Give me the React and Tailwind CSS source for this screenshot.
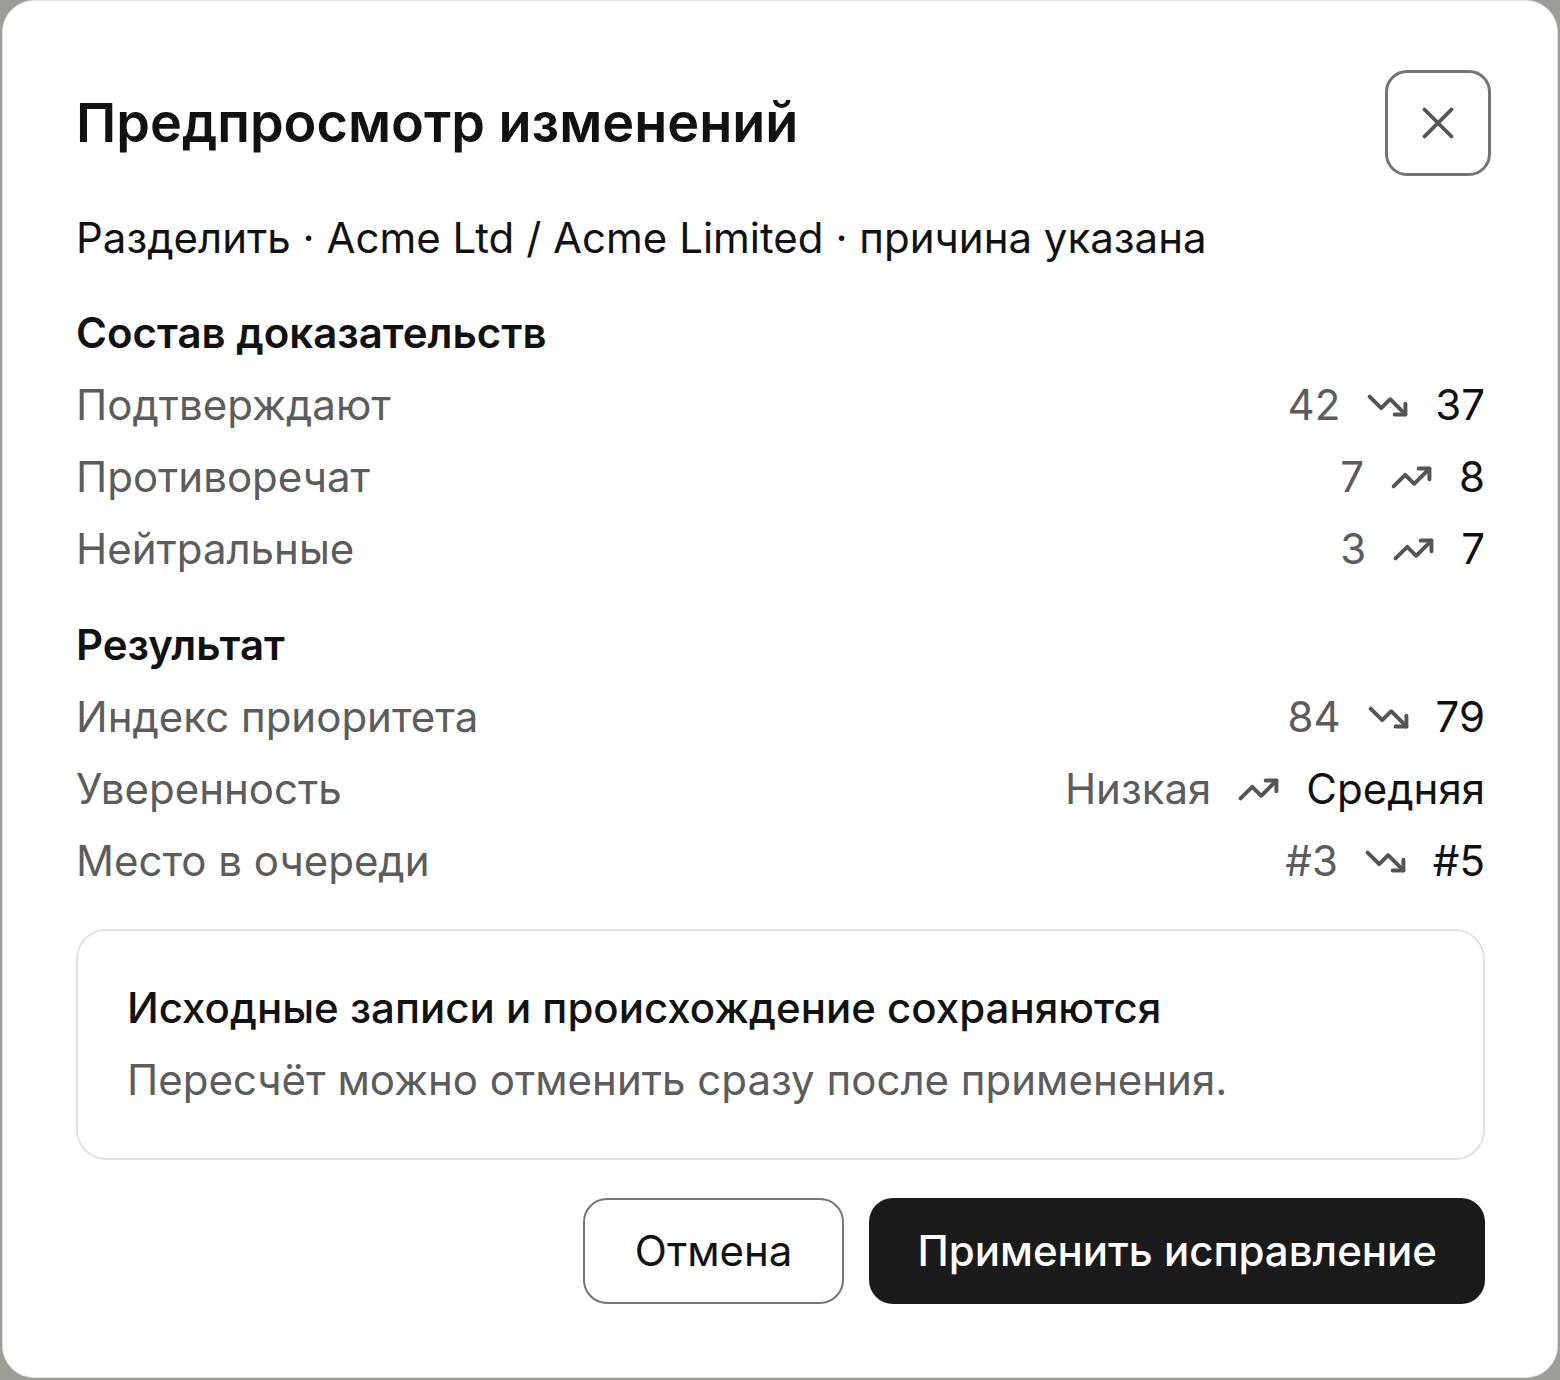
import React from 'react';
import { X, TrendingDown, TrendingUp } from 'lucide-react';

const evidence = [
    { label: 'Подтверждают', from: '42', to: '37', dir: 'down' },
    { label: 'Противоречат', from: '7', to: '8', dir: 'up' },
    { label: 'Нейтральные', from: '3', to: '7', dir: 'up' },
];

const result = [
    { label: 'Индекс приоритета', from: '84', to: '79', dir: 'down' },
    { label: 'Уверенность', from: 'Низкая', to: 'Средняя', dir: 'up' },
    { label: 'Место в очереди', from: '#3', to: '#5', dir: 'down' },
];

const DiffRow = ({ label, from, to, dir }) => {
    const Icon = dir === 'down' ? TrendingDown : TrendingUp;
    return (
        <div className="flex items-center justify-between h-[72px]">
            <span className="text-[#5c5c5c]">{label}</span>
            <div className="flex items-center gap-[26px]">
                <span className="text-[#5c5c5c]">{from}</span>
                <Icon size={43} strokeWidth={2.2} className="text-[#555]" />
                <span className="text-[#111]">{to}</span>
            </div>
        </div>
    );
};

const App = () => {
    return (
        <div className="w-[1560px] h-[1380px] bg-[#9d9c97] p-[2px] pt-0" style={{ fontFamily: 'Inter, "Noto Sans", sans-serif' }}>
            <div className="h-[1378px] bg-white rounded-[32px] border border-[#e2e2e2] pl-[73px] pr-[72px] flex flex-col text-[42px] leading-[60px]">
                <div className="flex items-center justify-between pt-[69px]">
                    <h1 className="text-[54px] leading-[64px] font-semibold text-[#111]">Предпросмотр изменений</h1>
                    <button className="w-[106px] h-[106px] -mr-[6px] rounded-[22px] border-[3px] border-[#747474] flex items-center justify-center text-[#555]">
                        <X size={54} strokeWidth={1.7} />
                    </button>
                </div>

                <p className="mt-[32px] text-[#111]">Разделить · Acme Ltd / Acme Limited · причина указана</p>

                <h2 className="mt-[35px] font-semibold text-[#111]">Состав доказательств</h2>
                <div className="mt-[6px]">
                    {evidence.map((r) => <DiffRow key={r.label} {...r} />)}
                </div>

                <h2 className="mt-[30px] font-semibold text-[#111]">Результат</h2>
                <div className="mt-[6px]">
                    {result.map((r) => <DiffRow key={r.label} {...r} />)}
                </div>

                <div className="mt-[32px] rounded-[30px] border-2 border-[#e2e2e2] px-[49px] pt-[41px] pb-[42px]">
                    <p className="font-medium text-[#111] leading-[72px]">Исходные записи и происхождение сохраняются</p>
                    <p className="text-[#5c5c5c] leading-[72px]">Пересчёт можно отменить сразу после применения.</p>
                </div>

                <div className="mt-[38px] flex justify-end gap-[25px]">
                    <button className="h-[106px] px-[50px] rounded-[24px] border-2 border-[#777] bg-white text-[#111]">Отмена</button>
                    <button className="h-[106px] px-[48px] rounded-[24px] bg-[#1a1a1a] text-white font-medium">Применить исправление</button>
                </div>
            </div>
        </div>
    );
};

export default App;
